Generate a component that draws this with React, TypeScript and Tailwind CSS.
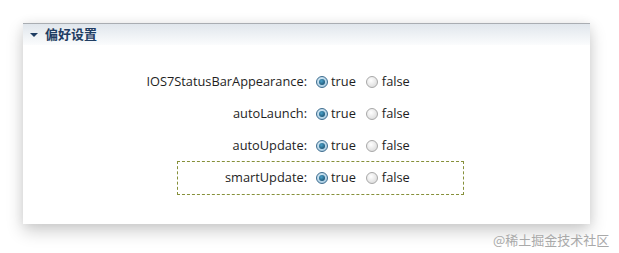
const rows = ["IOS7StatusBarAppearance", "autoLaunch", "autoUpdate"]

const Radio = ({ checked }: { checked: boolean }) => (
  <span
    className={
      checked
        ? "w-[12px] h-[12px] rounded-full border border-[#3d6c8e] bg-[radial-gradient(circle_at_40%_35%,#d9ecf7,#9cc3dc)] flex items-center justify-center"
        : "w-[12px] h-[12px] rounded-full border border-[#a8a8a8] bg-[radial-gradient(circle_at_40%_35%,#ffffff,#d4d4d4)]"
    }
  >
    {checked && (
      <span className="w-[6px] h-[6px] rounded-full bg-[radial-gradient(circle_at_40%_35%,#4aa0c8,#0f3f5e)]" />
    )}
  </span>
)

const Options = () => (
  <div className="flex items-center">
    <span className="flex items-center ml-[9px]">
      <Radio checked={true} />
      <span className="ml-[3px]">true</span>
    </span>
    <span className="flex items-center ml-[10px]">
      <Radio checked={false} />
      <span className="ml-[4px]">false</span>
    </span>
  </div>
)

export default function App() {
  return (
    <div className="w-[619px] h-[253px] bg-white relative font-['Open_Sans','Noto_Sans_CJK_SC',sans-serif] text-[12.8px] text-[#1e1e1e]">
      <div className="absolute left-[23px] top-[23px] w-[567px] h-[201px] bg-white shadow-[0_7px_16px_rgba(0,0,0,0.2),0_0_10px_rgba(0,0,0,0.06)]">
        <div className="h-[22px] border-t border-[#a9adb2] bg-[linear-gradient(#e0e6ec,#fbfcfd)] flex items-center pl-[7px]">
          <svg width="8" height="6" viewBox="0 0 8 6">
            <path d="M0 1 L8 1 L4 5 Z" fill="#1f3d63" />
          </svg>
          <span className="ml-[7px] text-[13px] font-bold text-[#1f3d63] font-['Noto_Sans_CJK_SC',sans-serif] -mt-[1px]">偏好设置</span>
        </div>
        <div className="pt-[20px]">
          {rows.map((r) => (
            <div key={r} className="flex items-center h-[32px] pt-[1px]">
              <span className="w-[284px] text-right">{r}:</span>
              <Options />
            </div>
          ))}
          <div className="ml-[154px] w-[287px] h-[34px] border border-dashed border-[#86903a] flex items-center">
            <span className="w-[129px] text-right">smartUpdate:</span>
            <Options />
          </div>
        </div>
      </div>
      <div className="absolute left-[493px] top-[230px] text-[13px] text-[#a9a9a9] font-['Noto_Sans_CJK_SC',sans-serif]">@稀土掘金技术社区</div>
    </div>
  )
}
